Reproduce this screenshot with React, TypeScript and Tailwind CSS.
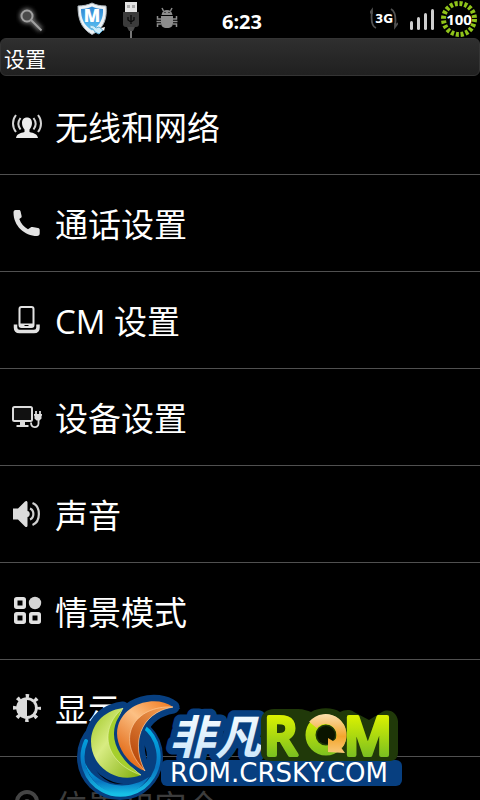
import React from 'react'

const sans = 'font-["Open_Sans","Noto_Sans_CJK_SC",sans-serif]'

type Setting = {
  label: string
  icon: React.ReactNode
  faded?: boolean
}

const WirelessIcon = () => (
  <svg viewBox="0 0 32 32" className="w-8 h-8" fill="none" stroke="#d4d4d4" strokeWidth="2">
    <path d="M5 5c-4 5-4 12 0 17M9.500 8c-2.600 3.500-2.600 8 0 11.500M27 5c4 5 4 12 0 17M22.500 8c2.600 3.500 2.600 8 0 11.500" />
    <path
      d="M16 7.500c3.200 0 5 2.200 5 5.500 0 3-1.200 5-2.500 6.500v2.500c4 1 8 2 8.500 6H5c.5-4 4.500-5 8.500-6v-2.500c-1.300-1.500-2.500-3.500-2.500-6.500 0-3.300 1.800-5.500 5-5.500z"
      fill="#ececec"
      stroke="none"
    />
  </svg>
)

const PhoneIcon = () => (
  <svg viewBox="0 0 32 32" className="w-8 h-8" fill="#e2e2e2">
    <path d="M4.500 3H8c1 0 1.400.6 1.600 1.600l1 4.400c.2 1-.1 1.500-1 2.100l-1.300 1c1.700 4.700 4.500 7.900 8.700 10.200l2.600-1.800c.7-.5 1.300-.6 2-.4l5.400 1c1.200.3 1.700.9 1.700 1.900v3.500c0 1.600-1 2.500-2.700 2.500C13.500 29 2.500 19 2.500 5.500c0-1.600.6-2.500 2-2.500z" />
  </svg>
)

const DockIcon = () => (
  <svg viewBox="0 0 32 32" className="w-8 h-8" fill="none" stroke="#e2e2e2">
    <rect x="8.500" y="3" width="14" height="20" rx="2" strokeWidth="2" />
    <path d="M8 21h15" strokeWidth="3" />
    <path d="M13.500 21.500h4" stroke="#000" />
    <path d="M4.500 20.500v3c0 2.500 1.500 4 4 4h14.500c2.500 0 4-1.500 4-4v-3" strokeWidth="3.500" />
  </svg>
)

const DeviceIcon = () => (
  <svg viewBox="0 0 32 32" className="w-8 h-8" fill="none" stroke="#dcdcdc" strokeWidth="2">
    <rect x="2" y="6" width="19" height="14" rx="1.500" fill="#111" />
    <path d="M9 21h5v3h3.500v2H5.500v-2H9z" fill="#dcdcdc" stroke="none" />
    <path d="M20 21.500c0 6 7.500 6 7.500 1V18M25 14v-4M29 14v-4" strokeWidth="1.800" />
    <path d="M23 13h8v1.500l-.5.500v2.500l-2 2h-3l-2-2V15l-.5-.5z" fill="#dcdcdc" stroke="none" />
  </svg>
)

const SoundIcon = () => (
  <svg viewBox="0 0 32 32" className="w-8 h-8" fill="none" stroke="#cfcfcf" strokeWidth="2.200">
    <path d="M2 10.500h5l7-7c1-1 2.500-.6 2.500 1V13c3 .4 3 5.600 0 6v8.500c0 1.600-1.500 2-2.500 1l-7-7H2z" fill="#dcdcdc" stroke="none" />
    <path d="M19 10.500c4.500 1.800 4.500 9.200 0 11M21.500 5c8.500 3.500 8.500 18.500 0 22" />
  </svg>
)

const ProfileIcon = () => (
  <svg viewBox="0 0 32 32" className="w-8 h-8" fill="none" stroke="#e2e2e2" strokeWidth="3.500">
    <rect x="4.750" y="3.750" width="8.500" height="8.500" rx="1" />
    <rect x="4.750" y="18.750" width="8.500" height="8.500" rx="1" />
    <rect x="19.750" y="18.750" width="8.500" height="8.500" rx="1" />
    <circle cx="24" cy="8" r="6.200" fill="#d6d6d6" stroke="none" />
  </svg>
)

const DisplayIcon = () => (
  <svg viewBox="0 0 32 32" className="w-8 h-8" fill="#dcdcdc">
    <circle cx="16" cy="16" r="12" fill="none" stroke="#dcdcdc" strokeWidth="4" strokeDasharray="3.400 6.025" strokeDashoffset="1.700" />
    <circle cx="16" cy="16" r="10.800" />
    <path d="M16 8a8 8 0 0 1 0 16z" fill="#000" />
  </svg>
)

const LocationIcon = () => (
  <svg viewBox="0 0 32 32" className="w-8 h-8" fill="none" stroke="#444" strokeWidth="4">
    <circle cx="16" cy="13" r="10" />
    <circle cx="16" cy="13" r="3" fill="#444" stroke="none" />
    <path d="M11 23l5 7 5-7" />
  </svg>
)

const settings: Setting[] = [
  { label: '无线和网络', icon: <WirelessIcon /> },
  { label: '通话设置', icon: <PhoneIcon /> },
  { label: 'CM 设置', icon: <DockIcon /> },
  { label: '设备设置', icon: <DeviceIcon /> },
  { label: '声音', icon: <SoundIcon /> },
  { label: '情景模式', icon: <ProfileIcon /> },
  { label: '显示', icon: <DisplayIcon /> },
  { label: '位置和安全', icon: <LocationIcon />, faded: true },
]

const SearchIcon = () => (
  <svg viewBox="0 0 32 38" className="w-8 h-[38px]" fill="none">
    <defs>
      <filter id="glow" x="-50%" y="-50%" width="200%" height="200%">
        <feGaussianBlur stdDeviation="2" />
      </filter>
    </defs>
    <g stroke="#777" strokeWidth="5" filter="url(#glow)">
      <circle cx="11" cy="16" r="5" />
      <path d="M15 20l10 10" />
    </g>
    <circle cx="11" cy="16" r="5.500" fill="#4a4a4a" stroke="#a0a0a0" strokeWidth="2" />
    <path d="M15 20l10.500 10.500" stroke="#a0a0a0" strokeWidth="2" />
  </svg>
)

const ShieldIcon = () => (
  <svg viewBox="0 0 32 38" className="w-8 h-[38px]">
    <defs>
      <linearGradient id="shield" x1="0" y1="0" x2="0" y2="1">
        <stop offset="0" stopColor="#2f86d0" />
        <stop offset="1" stopColor="#59c1f5" />
      </linearGradient>
    </defs>
    <path d="M16 3c4 2 8 3 14 3 1 11-1 22-14 28.500C4 28 2 17 2 6c5 0 10-1 14-3z" fill="#eef2f5" stroke="#aab4bb" />
    <path d="M16 6.500c3 1.500 6 2.300 11 2.500.5 9-2.500 16-11 21.500C7.500 25 5 18 5 9c5-.2 8-1 11-2.500z" fill="url(#shield)" />
    <text x="16" y="22" textAnchor="middle" fontSize="17" fill="#fff" className='font-["Open_Sans",sans-serif] font-extrabold'>
      M
    </text>
    <path d="M14 25l4 1 2 2 3-1 4 3-4 4-4-2-2-3-3-1z" fill="#c8ebfa" stroke="#61afd8" />
    <path d="M25 28l4-1-1 4z" fill="#fff" />
  </svg>
)

const UsbIcon = () => (
  <svg viewBox="0 0 18 38" className="w-[18px] h-[38px]">
    <path d="M3 2h12v10H3z" fill="#e4e4e4" />
    <path d="M5 5h3v3H5zM10 5h3v3h-3z" fill="#aaa" />
    <path d="M1 12h16v12c0 2-1 3-3 3H4c-2 0-3-1-3-3z" fill="#3b3b3b" />
    <path d="M5 27h8l-2 4H7z" fill="#4b4b4b" />
    <path d="M9 31v7" stroke="#777" strokeWidth="2" />
    <path d="M9 15v9M6 17v3l3 2 3-2v-3" fill="none" stroke="#0a0a0a" strokeWidth="1.300" />
  </svg>
)

const DebugIcon = () => (
  <svg viewBox="0 0 22 38" className="w-[22px] h-[38px]" fill="#8c8c8c" stroke="#8c8c8c">
    <path d="M5.500 15c.5-3.500 2.500-5 5.500-5s5 1.500 5.500 5z" stroke="none" />
    <path
      d="M7.500 11L6 8M14.500 11L16 8M5 19H1.500v-3M5 21.500H.5M5 24H1.500v3M17 19h3.500v-3M17 21.500h4.500M17 24h3.500v3"
      fill="none"
      strokeWidth="1.500"
    />
    <path d="M5 16h12v7c0 3-2 5-6 5s-6-2-6-5z" stroke="none" />
    <path d="M8.500 12.500h1M12.500 12.500h1" stroke="#000" />
  </svg>
)

const NetworkIcon = () => (
  <div className="relative w-7 h-[38px] flex items-center justify-center">
    <svg viewBox="0 0 28 38" className="absolute inset-0 w-7 h-[38px]" fill="none" stroke="#505050" strokeWidth="1.800">
      <path d="M6 28c-5-2-5-9-4-17M-1 14l3-4v4M21 9c5 3 5 10 4 17M28 23l-3 4v-4" />
    </svg>
    <span className='relative font-["DejaVu_Sans",sans-serif] text-xs font-bold leading-none text-white'>3G</span>
  </div>
)

const SignalIcon = () => (
  <div className="flex items-end gap-1 h-[22px]">
    <span className="w-[3px] h-[9px] rounded-sm bg-[#cfcfcf]" />
    <span className="w-[3px] h-[13px] rounded-sm bg-[#cfcfcf]" />
    <span className="w-[3px] h-[17px] rounded-sm bg-[#cfcfcf]" />
    <span className="w-[3px] h-[21px] rounded-sm bg-[#cfcfcf]" />
  </div>
)

const Battery = () => (
  <div className="relative w-[38px] h-[38px] flex items-center justify-center">
    <svg viewBox="0 0 38 38" className="absolute inset-0 w-[38px] h-[38px]" fill="none">
      <circle cx="19" cy="19" r="15.500" stroke="#8fc31a" strokeWidth="5" strokeDasharray="3.100 1.769" />
    </svg>
    <span className='relative font-["Open_Sans",sans-serif] text-[15px] font-bold leading-none text-white'>100</span>
  </div>
)

const StatusBar = () => (
  <header className="relative flex h-[38px] shrink-0 items-center justify-between pl-4 pr-0.5">
    <div className="flex items-center">
      <SearchIcon />
      <div className="ml-7">
        <ShieldIcon />
      </div>
      <div className="ml-3.5">
        <UsbIcon />
      </div>
      <div className="ml-4">
        <DebugIcon />
      </div>
    </div>
    <time className="absolute inset-x-0 top-1 text-center pl-1 text-xl font-bold leading-9 text-white">6:23</time>
    <div className="flex items-center">
      <NetworkIcon />
      <div className="ml-3 mr-1.5">
        <SignalIcon />
      </div>
      <Battery />
    </div>
  </header>
)

const Watermark = () => (
  <svg viewBox="0 0 326 110" className="pointer-events-none absolute bottom-0 left-1/2 -translate-x-1/2 w-[326px] h-[110px]">
    <defs>
      <linearGradient id="leaf" x1="0" y1="0" x2="1" y2="1">
        <stop offset="0" stopColor="#9cc51f" />
        <stop offset=".4" stopColor="#d8ec82" />
        <stop offset="1" stopColor="#7fae0a" />
      </linearGradient>
      <linearGradient id="flame" x1="1" y1="0" x2=".3" y2="1">
        <stop offset="0" stopColor="#f0761a" />
        <stop offset=".45" stopColor="#fcc084" />
        <stop offset="1" stopColor="#e0640f" />
      </linearGradient>
      <linearGradient id="flameDark" x1="1" y1="0" x2=".4" y2="1">
        <stop offset="0" stopColor="#f9a75a" />
        <stop offset="1" stopColor="#b9480a" />
      </linearGradient>
      <linearGradient id="ring" x1="0" y1="0" x2="0" y2="1">
        <stop offset="0" stopColor="#00b4e8" />
        <stop offset=".6" stopColor="#0875c1" />
        <stop offset="1" stopColor="#17c0e6" />
      </linearGradient>
      <linearGradient id="ice" x1="0" y1="0" x2="0" y2="1">
        <stop offset="0" stopColor="#fff" />
        <stop offset="1" stopColor="#c5e4fa" />
      </linearGradient>
      <linearGradient id="lime" gradientUnits="userSpaceOnUse" x1="0" y1="25" x2="0" y2="66">
        <stop offset="0" stopColor="#dcf200" />
        <stop offset="1" stopColor="#7cc020" />
      </linearGradient>
      <linearGradient id="gold" gradientUnits="userSpaceOnUse" x1="0" y1="25" x2="0" y2="64">
        <stop offset="0" stopColor="#fbdca8" />
        <stop offset=".55" stopColor="#f3a62c" />
        <stop offset="1" stopColor="#fac97c" />
      </linearGradient>
    </defs>

    {/* site name and address plate */}
    <rect x="84" y="70" width="241" height="26" rx="6" fill="#073f80" />
    <text
      x="92"
      y="64"
      fontSize="46"
      fill="url(#ice)"
      stroke="#073f80"
      strokeWidth="13"
      strokeLinejoin="round"
      paintOrder="stroke"
      className='font-["Noto_Sans_CJK_SC",sans-serif] italic font-bold'
    >
      非凡
    </text>

    {/* swirl */}
    <g fill="#073f80" stroke="#073f80" strokeWidth="13" strokeLinejoin="round">
      <circle cx="43" cy="67" r="35" fill="none" strokeWidth="16" />
      <path d="M46 18C17 22 7 49 19 70c9 15 28 22 45 15C45 72 32 42 46 18z" />
      <path d="M96 17C80 5 48 12 41 36c-5 18 10 39 27 45C54 55 62 23 96 17z" />
    </g>
    <path d="M66 36a38 38 0 1 1-57 15" fill="none" stroke="url(#ring)" strokeWidth="4" strokeLinecap="round" />
    <path d="M8 73c10 22 40 30 64 14-8 12-18 17-28 17-15 0-31-11-36-31z" fill="url(#ring)" />
    <path
      d="M46 18C17 22 7 49 19 70c9 15 28 22 45 15C45 72 32 42 46 18z"
      fill="url(#leaf)"
      stroke="#073f80"
      strokeWidth="5"
      paintOrder="stroke"
    />
    <path d="M46 18C22 38 26 72 64 85 45 72 32 42 46 18z" fill="#a5cf2c" stroke="#e4f2a5" strokeWidth=".6" />
    <path
      d="M96 17C80 5 48 12 41 36c-5 18 10 39 27 45C54 55 62 23 96 17z"
      fill="url(#flame)"
      stroke="#073f80"
      strokeWidth="6"
      paintOrder="stroke"
    />
    <path d="M96 17C58 15 36 48 68 81 54 55 62 23 96 17z" fill="url(#flameDark)" stroke="#ffd5a7" strokeWidth=".6" />

    {/* the arrow ring sits between the two letters */}
    <path
      d="M197 19h24c6 0 10 2 13 3 8-5 22-5 29 0 4-2 10-3 14 0l15 8 13-8c8-4 15 1 16 9v31c0 7-4 9-9 9H194c-6 0-10-3-10-9V31c0-7 5-12 13-12z"
      fill="#203909"
    />
    <circle cx="249" cy="45" r="9" fill="#0a1400" />
    <g
      className='font-["Open_Sans",sans-serif] font-semibold'
      fontSize="52"
      fill="url(#lime)"
      stroke="url(#lime)"
      strokeWidth="4"
      strokeLinejoin="round"
    >
      <text x="187" y="65">R</text>
      <text x="267" y="65">M</text>
    </g>
    <circle cx="249" cy="45" r="15.500" fill="none" stroke="url(#lime)" strokeWidth="10" />
    <path d="M236 35a15.500 15.500 0 0 1 25 20" fill="none" stroke="url(#gold)" strokeWidth="10" />
    <path d="M251 48l5 3 6-4 1 9 5 7-17-1z" fill="url(#gold)" />

    <text x="93" y="92" className='font-["DejaVu_Sans",sans-serif]' fontSize="26" fill="#fff">
      ROM.CRSKY.COM
    </text>
  </svg>
)

const App: React.FC = () => {
  return (
    <div className={`relative flex h-screen w-full flex-col overflow-hidden bg-black text-white ${sans}`}>
      <StatusBar />
      <h1 className="mb-0.5 flex h-[38px] shrink-0 items-center rounded-md border border-[#343434] bg-linear-to-b from-[#2f2f2f] to-[#202020] px-[3px] pt-1 text-[21px] leading-8">
        设置
      </h1>
      <ul className="flex-1 overflow-hidden">
        {settings.map((s) => (
          <li key={s.label} className={s.faded ? 'text-[#3c3c3c]' : 'border-b border-[#505050]'}>
            <button className="flex h-24 w-full items-center gap-3 pl-[11px] text-left text-[33px] leading-10">
              {s.icon}
              <span className="pt-1">{s.label}</span>
            </button>
          </li>
        ))}
      </ul>
      <Watermark />
    </div>
  )
}

export default App
